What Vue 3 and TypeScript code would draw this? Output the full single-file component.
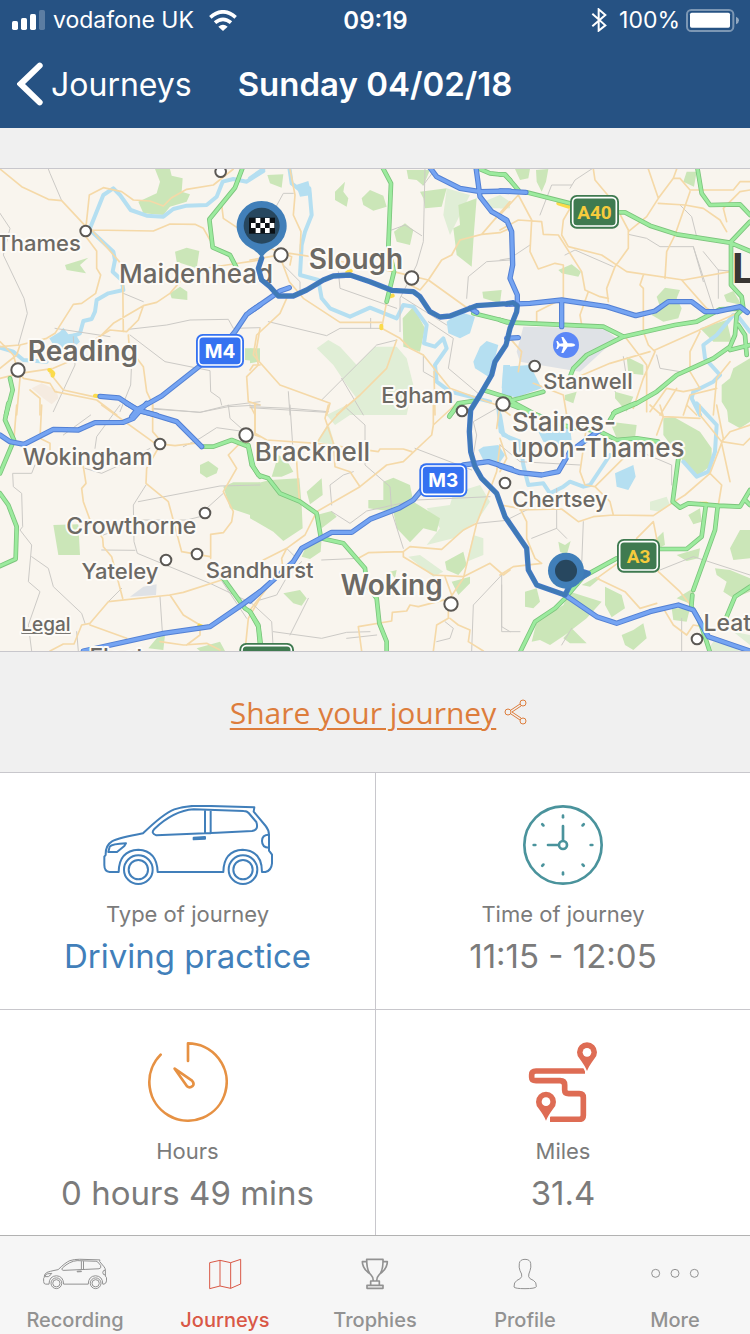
<script setup lang="ts">
interface Section {
  x: number
  y: number
  wood: string
  park: string
  lake: string
  river: string
  lane: string
  minor: string
  primary: string
  motorway: string
}

interface Label {
  text: string
  x: number
  y: number
  size: number
  kind: string
}

// The map is drawn in six sections, each with its own origin.
const sections: Section[] = [
  {
    x: 0,
    y: 0,
    wood: 'M415,110 470,85 480,50 465,12 510,12 515,32 548,40 545,80 570,88 560,110 510,125 490,150 430,145Z M525,260 560,248 598,258 590,310 530,290Z M195,300 265,278 240,300 258,325 200,315Z M510,385 540,365 562,380 562,405 515,400Z M735,550 780,550 780,590 735,585Z',
    park: '',
    lake: 'M148,520 180,500 190,488 205,508 225,505 240,530 205,562 165,548Z',
    river: 'M268,195 310,90 340,70 360,90 392,135 440,152 490,155 520,132 560,122 620,120 650,95 668,50 700,42 740,50 790,18 M270,195 340,260 345,285 338,320 365,345 370,375 325,385 290,405 285,440 275,462 250,468 240,505 200,520 M0,548 40,560 70,585 140,590',
    lane: 'M145,12 150,25 185,107 M0,145 30,190 10,270 72,400 82,445 55,540 M370,385 430,410 M385,493 500,480 570,465 685,463 700,490 780,488 M390,510 495,590 630,617 632,680 660,700 665,720 M395,590 392,660 360,740 M165,490 330,515 M220,515 225,600 160,740 M458,732 600,742 680,722 780,710',
    minor: 'M0,12 65,65 145,103 185,107 258,185 268,90 310,68 365,80 400,105 450,108 490,123 515,98 560,73 640,60 700,12 M275,195 460,198 510,177 585,178 610,190 630,225 M275,195 358,290 368,330 370,500 M258,215 290,258 290,310 302,330 287,385 245,415 220,418 165,505 140,520 60,540 0,545 M300,515 340,475 430,422 470,412 510,385 540,350 600,312 680,300 780,285 M430,422 415,465 380,500 330,495 290,520 230,580 160,610 60,625 0,640 M385,510 388,550 430,605 440,680 458,718 458,750 M60,625 70,640 150,655 165,680 290,705 350,750 M150,625 190,675 280,695 M60,640 50,750 M90,675 120,700 120,750 M0,530 40,570 60,640 M0,610 50,570 60,540 M780,490 768,560 775,600 740,635 745,710 780,720 M665,120 670,160 715,190 735,230',
    primary: 'M728,8 705,68 628,163 638,247 690,270 708,305 M30,640 38,675 18,750',
    motorway: 'M780,420 740,448 705,500 660,555 485,693 410,735 395,755 M300,694 357,699 415,737 470,750'
  },
  {
    x: 750,
    y: 0,
    wood: 'M52,30 100,28 95,68 60,55Z M255,80 285,50 280,80 295,100 290,125 255,105Z M335,100 360,75 400,92 410,125 370,137 340,120Z M470,15 540,15 520,62 500,45 475,42Z M510,80 590,70 575,125 525,130 520,100Z M625,120 680,100 672,200 665,305 620,270 610,190 630,180Z M432,200 465,175 490,195 480,240 440,230Z M697,380 755,375 750,415 700,400Z M458,460 490,425 525,490 510,560 460,545Z M0,550 18,555 25,590 0,595Z',
    park: 'M200,550 235,525 270,545 320,600 375,545 440,545 470,580 490,660 470,750 260,750 320,700 290,660 250,600Z M590,70 660,90 640,130 600,210 580,150Z M700,110 750,90 780,110 770,130 710,130Z',
    lake: 'M590,470 630,440 675,455 660,505 630,520 595,505Z M690,545 710,528 745,540 735,580 715,635 675,610 670,590Z M760,600 780,600 780,680 755,670Z M138,60 175,48 185,90 150,95Z',
    river: 'M0,40 40,12 M118,8 125,55 150,75 178,70 185,150 165,200 155,240 150,330 205,345 215,400 240,430 300,455 360,428 440,460 460,420 490,425 530,480 522,535 555,545 580,520 590,550 555,600 560,650 600,680 660,695 720,710',
    lane: 'M55,470 230,512 270,490 395,490 M265,320 270,370 440,430 M425,195 465,180 515,212 M525,12 520,230 500,300 450,400 450,500 M520,60 550,20 M780,285 710,290 655,335 650,400 M455,395 590,480 M535,470 610,520 595,610 690,690 M440,525 380,540 215,705 M0,725 120,730 235,740 M520,570 520,620 555,640 M70,140 100,85 130,85 M100,300 150,350 150,380 M115,680 120,750 M275,640 340,750 M362,460 362,490',
    minor: 'M120,12 135,90 130,150 153,200 150,260 M0,285 60,275 120,265 250,285 430,320 535,345 M90,275 118,350 160,400 270,472 395,472 M60,250 125,275 120,300 M410,410 395,490 450,520 480,550 520,570 600,670 740,720 780,750 M440,525 410,610 330,690 260,750 M660,435 535,345 510,375 480,360 M535,345 575,285 605,270 630,225 695,208 750,203 780,190 M695,208 780,110 M110,400 90,445 20,510 10,570 90,660 240,715 230,750 M0,615 10,600 30,600 M0,720 15,750 M552,620 555,750',
    primary: 'M398,8 423,55 415,245 432,320 410,410 M690,12 720,25 765,30 780,45 M670,445 780,472 M598,755 625,715 670,708 M700,675 780,700',
    motorway: 'M540,8 560,35 630,70 690,80 780,78 M678,8 690,95 725,140 770,165 M0,440 90,378 118,368 M660,430 680,442'
  },
  {
    x: 1500,
    y: 0,
    wood: 'M45,12 90,12 85,40 60,45Z M108,15 145,12 138,50 125,80 110,50Z M560,20 590,20 582,65 550,50Z M470,395 495,368 540,375 530,400 545,430 535,460 490,470 455,450 480,425Z M175,315 215,298 243,320 235,335 185,325Z M600,490 680,465 695,530 640,530Z M672,390 700,378 725,420 680,410Z M750,580 700,610 690,640 665,660 665,710 690,750 750,750Z M380,575 430,600 430,630 385,625Z M345,680 400,695 380,740 345,700Z M195,690 230,680 220,715 195,705Z',
    park: 'M0,110 30,110 30,130 0,130Z',
    lake: 'M10,605 90,600 125,670 50,697 5,690Z',
    river: 'M700,450 650,510 610,540 615,580 660,630 640,650 580,680 575,700 600,750 M715,455 750,500',
    lane: 'M215,60 155,60 120,150 M275,12 225,45 210,70 M385,208 440,220 480,245 580,245 610,350 M540,120 575,155 590,215 M580,245 640,430 M610,260 655,315 655,400 M195,270 225,255 340,305 M0,285 30,280 90,240 M470,570 480,610 540,620 M370,575 380,640 345,680 M655,315 690,318',
    minor: 'M280,12 285,45 340,110 385,195 385,250 345,305 320,370 325,410 M0,150 55,90 95,165 90,260 115,312 165,295 190,300 190,400 110,440 110,475 M0,195 55,165 125,170 130,208 175,210 245,320 255,375 300,395 325,400 M210,130 190,165 185,210 205,245 305,270 380,320 550,345 690,320 M445,12 475,100 440,155 385,200 M475,115 555,120 610,130 660,165 680,200 M530,12 520,40 475,100 M520,40 540,40 570,75 700,75 720,50 750,50 M680,170 670,130 720,80 750,75 M570,80 525,210 500,260 495,340 M545,345 620,430 640,440 M430,330 420,360 430,370 430,500 445,540 465,560 430,640 400,730 M265,380 240,450 245,480 M30,520 65,560 55,620 M465,555 720,440 M375,515 440,600 440,740 M200,650 330,595 450,560 M600,500 570,560 570,620 600,670 550,680 500,670 450,740 M690,590 650,640 640,750 M480,750 530,670 M100,655 190,690 200,750 M550,750 570,690 650,670',
    primary: 'M0,28 15,28 55,75 M80,82 210,115 M360,142 375,142 450,182 530,208 690,233 750,258 M592,8 605,85 630,120 720,118 750,150 M750,170 693,230 693,360 725,395 730,430 710,450 705,510 690,545 640,580 530,630 470,680 410,715 340,745 M0,465 20,472 310,485 370,515 525,480 590,470 660,433 730,430 M370,515 260,570 220,610 212,630 M715,480 735,510 740,570 M690,555 750,540 M10,712 60,700 130,680 M35,710 110,750',
    motorway: 'M0,78 78,82 M0,155 22,170 35,200 38,300 30,340 52,390 52,415 M20,418 90,415 185,405 320,425 407,452 465,438 505,410 575,410 615,440 650,440 720,425 742,442 M185,405 185,485 M20,520 55,518'
  },
  {
    x: 0,
    y: 720,
    wood: 'M600,180 625,168 655,190 650,205 620,218 600,205Z M160,360 235,358 240,450 175,450Z M670,245 700,232 780,232 780,340 690,310Z M445,730 470,700 495,690 490,735Z M590,730 660,710 675,738 600,738Z',
    park: '',
    lake: '',
    river: '',
    lane: 'M460,10 600,22 685,5 780,0 M685,0 690,40 735,80 M550,125 600,100 650,68 735,80 M105,180 95,205 38,205 40,245 65,265 68,365 60,375 95,420 85,530 120,560 85,660 95,738 M95,455 145,490 160,545 245,625 255,655 M415,290 660,243 780,240 M438,240 400,300 402,410 412,445 630,535 735,585 M415,345 560,345 600,335 M620,310 670,265 M305,435 405,436 M325,590 365,550 M480,575 487,680 M255,190 305,205 360,180 450,130 M285,130 290,95 360,0 M660,520 740,640 M230,680 235,738 M310,390 350,375 M190,90 272,30',
    minor: 'M305,0 465,115 525,122 600,113 M458,0 458,80 480,105 M480,120 440,190 438,235 505,290 545,440 630,455 M745,110 715,120 685,150 710,190 670,260 700,320 695,350 670,383 632,388 632,460 M200,170 250,185 258,235 245,250 250,290 270,345 308,400 310,425 335,455 368,580 M150,738 190,717 222,717 245,660 270,655 325,590 510,570 550,562 665,525 M510,570 550,630 600,660 600,690 560,720 M270,660 380,700 M480,710 550,720 620,715 660,735 M780,580 745,640 735,738 M50,0 42,100 M125,0 120,100 150,115 150,140 M765,0 765,90 780,95',
    primary: 'M25,-5 15,45 42,105 0,205 M0,265 25,300 50,365 47,462 0,483 M605,125 640,125 695,105 745,125 755,180 780,215 M670,520 735,610 750,620 775,665 780,720',
    motorway: 'M0,90 30,110 72,118 160,73 235,75 285,53 370,52 400,40 440,-5 M380,-5 415,15 530,50 605,125 M780,560 725,600 630,665 490,685 250,738'
  },
  {
    x: 750,
    y: 720,
    wood: 'M0,240 60,225 148,220 155,300 158,370 100,408 70,380 0,340Z M85,150 110,165 130,200 95,215 65,215Z M170,260 215,220 218,270 180,298Z M200,330 245,318 260,335 215,370Z M165,430 215,400 212,440 180,462 155,455Z M355,285 400,285 400,230 430,218 480,240 490,290 570,340 560,380 520,370 480,412 440,370 430,320 355,310Z M585,470 640,440 650,480 625,510 590,495Z M605,530 660,515 660,535 625,570Z M100,565 150,555 170,580 155,602 130,595Z M420,500 440,495 435,520Z',
    park: 'M230,30 290,0 330,0 330,10 255,60Z M200,110 235,55 255,120Z M530,310 600,300 610,265 690,240 720,290 680,350 610,400 530,420 570,370Z M475,455 510,450 580,500 550,515Z M670,390 700,400 700,450 650,470Z',
    lake: 'M685,135 700,125 745,120 765,150 750,172 700,165Z',
    river: 'M745,10 752,80 780,100',
    lane: 'M120,0 130,150 M0,8 230,22 M290,10 345,60 345,180 420,245 425,320 460,430 M245,300 240,240 280,210 310,200 M245,320 300,355 350,318 430,300 500,285 720,275 M110,430 140,460 M325,460 215,465 M175,580 120,690 M70,680 215,700 290,682 360,680 M0,590 65,650 70,738 M290,700 380,690 M495,130 665,195 M755,665 755,510 670,600 665,738 M755,665 780,680 M585,650 610,670 600,700 560,710 M680,355 780,345 M670,150 680,90 670,50 740,10 M30,585 80,570 120,500 155,470',
    minor: 'M15,-5 15,85 50,105 200,115 385,140 390,132 460,132 485,140 M615,0 550,60 545,90 460,170 410,180 330,245 200,320 165,390 110,430 40,465 M235,0 225,40 250,115 255,185 300,200 330,245 M290,0 235,60 200,115 M140,170 148,285 M325,460 355,443 460,440 480,425 575,433 640,375 680,355 725,240 740,200 750,120 M460,440 460,455 550,510 640,515 720,475 760,510 780,495 M680,355 640,520 600,580 505,605 480,600 470,618 427,622 425,648 325,665 335,738 M585,515 605,570 M595,600 595,640 560,660 550,738 M600,640 625,660 660,675 655,710 700,738 M110,430 95,460 100,500 M750,0 740,70 M90,500 0,615 M550,60 550,0',
    primary: 'M-5,120 10,185 25,210 55,220 90,265 150,290 200,325 213,400 280,415 345,490 350,540 380,580 388,655 410,710 410,742 M0,620 25,660 32,715 M600,30 622,5',
    motorway: 'M0,588 70,525 130,470 155,430 245,382 305,382 360,343 450,308 490,285 515,255 M640,180 715,170 785,192'
  },
  {
    x: 1500,
    y: 720,
    wood: 'M490,40 520,35 600,80 635,130 635,180 590,215 550,170 490,90Z M680,0 750,0 750,50 720,70 685,50Z M330,50 410,60 405,100 350,100Z M565,330 600,310 605,350 580,358Z M470,400 490,380 495,420 475,430Z M530,450 600,430 595,460 560,468Z M690,430 720,375 750,375 750,460 700,465Z M645,490 690,495 750,520 750,560 700,580 670,560 680,530 650,510Z M75,560 110,550 120,590 100,610 75,605Z M175,410 195,420 212,408 200,450 180,440Z M245,540 290,515 300,520 270,545Z M95,710 110,650 190,600 210,560 305,590 260,640 195,690 150,720 120,705Z M315,545 365,570 375,610 335,637 315,600Z M365,690 400,675 430,655 440,700 400,735 375,720Z M190,700 215,670 260,715 210,715Z M530,580 580,550 580,600Z M515,610 570,610 560,650 520,645Z',
    park: 'M450,290 500,275 510,300 480,320 450,315Z M640,710 690,720 720,738 620,738Z M700,680 750,690 750,720Z',
    lake: 'M345,205 400,180 407,215 385,255 350,245Z M115,80 210,70 215,105 170,120 130,110Z',
    river: 'M0,30 10,90 60,110 70,180 85,240 130,235 150,265 190,245 210,230 250,245 270,240 300,195 330,150 M590,-5 650,60 645,140 625,200 590,215 550,170',
    lane: 'M5,540 5,680 60,680 M170,250 170,370 200,400 M250,350 245,480 M95,400 170,370 M90,310 30,340 M420,140 515,180 515,240 M480,495 580,455 750,510 M545,640 545,738 M185,720 215,670 M0,120 60,170 240,180 M375,110 375,150',
    minor: 'M0,100 20,160 0,200 M260,60 240,200 255,240 285,245 330,290 340,330 460,332 515,295 555,270 630,205 665,240 655,300 M285,245 400,130 M0,300 60,310 80,350 80,400 105,460 125,475 40,485 0,510 M60,315 185,312 235,350 280,335 340,330 M410,400 460,350 470,400 475,500 540,560 580,610 M290,520 360,470 M290,520 375,560 420,610 470,595 M490,610 520,660 560,690 580,660 610,665 M450,0 490,35 600,40 M480,0 490,35 470,90 M560,0 590,30 M600,0 600,30 665,110 730,120 750,100 M665,110 690,80 750,60 M650,0 670,100 630,205 M665,115 690,230',
    primary: 'M35,0 150,45 M150,55 300,80 350,105 410,100 475,110 M330,45 345,20 405,-5 M535,160 518,290 540,308 565,295 655,302 720,305 750,255 M735,285 750,300 M617,305 605,395 560,432 475,432 M653,305 645,375 580,555 M577,570 574,605 595,640 610,680 630,742 M350,460 250,515 195,580 165,610 105,650 60,742 M680,635 705,575 750,545',
    motorway: 'M0,183 60,203 125,210 175,200 210,140 300,75 M195,570 290,635 350,655 450,620 535,600 580,615 625,695 750,738'
  }
]

const routeLine =
  'M785,280 775,310 785,345 810,365 835,393 880,393 920,375 970,345 1000,333 1050,330 1110,350 1175,376 1240,380 1260,395 1290,440 1320,456 1350,453 1430,422 1520,416 1540,413 1552,422 1550,440 1530,490 1518,540 1485,590 1475,630 1440,690 1412,735 1408,800 1412,860 1425,905 1445,940 1490,985 1515,1055 1580,1150 1585,1215 1610,1260 1695,1290 1710,1260 1765,1225 1750,1220'

const towns: number[][] = [
  [662, 20, 16], [257, 198, 16], [54, 615, 20], [843, 270, 20], [1235, 339, 20],
  [1604, 603, 16], [1509, 717, 20], [480, 837, 16], [738, 810, 20], [615, 1044, 16],
  [591, 1167, 16], [498, 1185, 16], [1386, 738, 16], [1515, 954, 16], [1353, 1317, 20],
  [2091, 1422, 16]
]

const labels: Label[] = [
  { text: 'Thames', x: 116, y: 257, size: 66, kind: 'town' },
  { text: 'Maidenhead', x: 588, y: 354, size: 78, kind: 'town' },
  { text: 'Reading', x: 249, y: 588, size: 84, kind: 'city' },
  { text: 'Slough', x: 1068, y: 312, size: 84, kind: 'city' },
  { text: 'Egham', x: 1252, y: 714, size: 66, kind: 'town' },
  { text: 'Stanwell', x: 1764, y: 672, size: 66, kind: 'town' },
  { text: 'Staines-', x: 1692, y: 798, size: 78, kind: 'town' },
  { text: 'upon-Thames', x: 1794, y: 876, size: 78, kind: 'town' },
  { text: 'Chertsey', x: 1680, y: 1026, size: 66, kind: 'town' },
  { text: 'Wokingham', x: 263, y: 900, size: 69, kind: 'town' },
  { text: 'Crowthorne', x: 394, y: 1106, size: 69, kind: 'town' },
  { text: 'Yateley', x: 360, y: 1242, size: 66, kind: 'town' },
  { text: 'Sandhurst', x: 779, y: 1238, size: 66, kind: 'town' },
  { text: 'Bracknell', x: 937, y: 889, size: 78, kind: 'town' },
  { text: 'Woking', x: 1175, y: 1290, size: 84, kind: 'city' },
  { text: 'Leat', x: 2182, y: 1398, size: 69, kind: 'town' },
  { text: 'Fleet', x: 350, y: 1500, size: 69, kind: 'town' }
]

const shields = [
  { text: 'M4', x: 588, y: 507, w: 144, kind: 'm' },
  { text: 'M3', x: 1258, y: 895, w: 144, kind: 'm' },
  { text: 'A40', x: 1710, y: 90, w: 147, kind: 'a' },
  { text: 'A3', x: 1851, y: 1122, w: 129, kind: 'a' },
  { text: '', x: 718, y: 1434, w: 164, kind: 'a' }
]

const flagCells: number[][] = [
  [1, 0], [3, 0], [0, 1], [2, 1], [4, 1], [1, 2], [3, 2]
]

const ticks: number[] = [0, 45, 90, 135, 180, 225, 270, 315]

const tabs = [
  { name: 'Recording', active: false },
  { name: 'Journeys', active: true },
  { name: 'Trophies', active: false },
  { name: 'Profile', active: false },
  { name: 'More', active: false }
]
</script>

<template>
  <div class="screen">
    <svg class="defs" aria-hidden="true">
      <symbol id="car" viewBox="157 75 512 240">
        <path d="M205,276 H178 Q162,275 162,255 V230 L166,225 Q165,196 185,184 Q205,174 278,160 Q340,100 372,88 Q405,77 450,77 L612,82 L610,95 L646,138 Q656,150 656,165 V212 L665,224 V250 Q663,272 645,276 H635 Q635,212 577,209 Q520,212 519,276 H322 Q320,212 264,209 Q206,212 205,276Z" />
        <circle cx="264" cy="269" r="43" /><circle cx="264" cy="269" r="29" />
        <circle cx="578" cy="269" r="43" /><circle cx="578" cy="269" r="29" />
        <path d="M318,166 Q300,160 312,147 Q370,92 430,88 L580,93 Q590,93 595,99 L618,126 Q626,150 605,153 L500,158Z M464,92V160 M481,92V160" />
        <path d="M430,173 464,171 464,176 430,178Z" />
        <path d="M174,216 178,200 Q185,192 227,190 L222,198 L200,216Z M656,164 Q635,164 635,183 Q635,203 656,203" />
      </symbol>
    </svg>

    <header class="top">
      <div class="status">
        <div class="carrier">
          <svg class="signal" viewBox="36 30 99 60" aria-hidden="true">
            <rect x="36" y="63" width="18" height="27" rx="5" />
            <rect x="63" y="54" width="18" height="36" rx="5" />
            <rect x="90" y="42" width="18" height="48" rx="5" />
            <rect class="dim" x="117" y="30" width="18" height="60" rx="5" />
          </svg>
          <span>vodafone UK</span>
          <svg class="wifi" viewBox="627 28 84 63" aria-hidden="true">
            <path class="arc" d="M631,50 Q669,17 707,50" />
            <path class="arc" d="M645,66 Q669,46 693,66" />
            <path d="M655,78 Q669,66 683,78 L669,91Z" />
          </svg>
        </div>
        <span class="clock">09:19</span>
        <div class="power">
          <svg class="bluetooth" viewBox="648 24 48 72" aria-hidden="true">
            <path d="M652,41 691,76 671,92 671,28 691,45 652,79" />
          </svg>
          <span>100%</span>
          <svg class="battery" viewBox="933 27 159 69" aria-hidden="true">
            <rect class="case" x="936" y="30" width="139" height="63" rx="13" />
            <rect x="945" y="38" width="120" height="45" rx="5" />
            <path class="nub" d="M1083,50 Q1092,54 1092,61 Q1092,69 1083,73Z" />
          </svg>
        </div>
      </div>
      <div class="bar">
        <button class="back" type="button">
          <svg viewBox="51 186 78 132" aria-hidden="true"><path d="M119,197 62,252 119,307" /></svg>
          <span>Journeys</span>
        </button>
        <h1>Sunday 04/02/18</h1>
      </div>
    </header>

    <main>
      <section class="map" aria-label="Map of the journey">
        <svg viewBox="0 12 2250 1446">
          <rect class="land" x="0" y="12" width="2250" height="1446" />
          <g v-for="s in sections" :key="`fill-${s.x}-${s.y}`" :transform="`translate(${s.x} ${s.y})`">
            <path class="park" :d="s.park" />
            <path class="wood" :d="s.wood" />
            <path class="river" :d="s.river" />
            <path class="lake" :d="s.lake" />
          </g>
          <path class="built" d="M1570,485 1810,490 1850,520 1740,620 1560,590 1550,560Z M390,1295 430,1265 470,1258 468,1290Z" />
          <path class="suburb" d="M95,670 125,655 170,675 175,700 155,718 130,700Z" />
          <g v-for="s in sections" :key="`road-${s.x}-${s.y}`" :transform="`translate(${s.x} ${s.y})`">
            <path class="lane" :d="s.lane" />
            <path class="minor" :d="s.minor" />
          </g>
          <path class="works" d="M148,615 158,622 M160,625 158,632 M285,692 296,694 M1042,322 1052,318 M1144,482 1144,490 M1168,395 1178,392 M1675,115 1705,125 M598,1382 606,1385 M2100,1016 2120,1016" />
          <g v-for="s in sections" :key="`pc-${s.x}-${s.y}`" :transform="`translate(${s.x} ${s.y})`">
            <path class="primary edge" :d="s.primary" />
          </g>
          <g v-for="s in sections" :key="`p-${s.x}-${s.y}`" :transform="`translate(${s.x} ${s.y})`">
            <path class="primary" :d="s.primary" />
          </g>
          <g v-for="s in sections" :key="`mc-${s.x}-${s.y}`" :transform="`translate(${s.x} ${s.y})`">
            <path class="motorway edge" :d="s.motorway" />
          </g>
          <g v-for="s in sections" :key="`m-${s.x}-${s.y}`" :transform="`translate(${s.x} ${s.y})`">
            <path class="motorway" :d="s.motorway" />
          </g>

          <text
            v-for="l in labels"
            :key="l.text"
            :class="l.kind"
            :x="l.x"
            :y="l.y"
            :font-size="l.size"
            text-anchor="middle"
          >{{ l.text }}</text>
          <text class="capital" x="2196" y="355" font-size="124">L</text>
          <a href="#legal"><text class="legal" x="138" y="1398" font-size="57" text-anchor="middle">Legal</text></a>

          <path class="route edge" :d="routeLine" />
          <path class="route" :d="routeLine" />

          <circle v-for="t in towns" :key="`${t[0]}-${t[1]}`" class="spot" :cx="t[0]" :cy="t[1]" :r="t[2]" />

          <g v-for="s in shields" :key="`${s.x}-${s.y}`" :class="['shield', s.kind]">
            <rect class="plate" :x="s.x" :y="s.y" :width="s.w" height="101" rx="20" />
            <rect class="rim" :x="s.x + 8" :y="s.y + 8" :width="s.w - 16" height="85" rx="13" />
            <text :x="s.x + s.w / 2" :y="s.y + 71" text-anchor="middle">{{ s.text }}</text>
          </g>

          <circle class="airport" cx="1698" cy="540" r="39" />
          <path class="plane" d="M1726,540 Q1724,535 1714,535 L1703,535 L1690,516 L1684,516 L1690,535 L1679,536 L1673,528 L1669,528 L1672,540 L1669,552 L1673,552 L1679,544 L1690,545 L1684,564 L1690,564 L1703,545 L1714,545 Q1724,545 1726,540Z" />

          <path class="pin" d="M785,280 Q776,262 752,250 A75,75 0 1 1 818,250 Q794,262 785,280Z" />
          <circle class="core" cx="785" cy="182" r="54" />
          <rect class="flag" x="747" y="158" width="78" height="48" />
          <rect v-for="c in flagCells" :key="`${c[0]}-${c[1]}`" class="cell" :x="753 + c[0] * 14" :y="159 + c[1] * 15" width="14" height="15" />
          <circle class="pin" cx="1698" cy="1217" r="54" />
          <circle class="core" cx="1698" cy="1217" r="33" />
        </svg>
      </section>

      <div class="share">
        <a href="#share">Share your journey</a>
        <svg viewBox="0 0 24 26" aria-hidden="true">
          <circle cx="4" cy="13" r="3" /><circle cx="19" cy="4" r="3" /><circle cx="19" cy="22" r="3" />
          <path d="M7,11 16,5 M8,13 17,7 M7,15 16,21 M8,13 17,19" />
        </svg>
      </div>

      <section class="facts">
        <article class="fact">
          <svg class="wide blue" aria-hidden="true"><use href="#car" /></svg>
          <p class="label">Type of journey</p>
          <p class="value accent">Driving practice</p>
        </article>
        <article class="fact">
          <svg class="teal" viewBox="219 75 240 240" aria-hidden="true">
            <circle cx="339" cy="195" r="116" />
            <circle cx="339" cy="195" r="12" />
            <path d="M339,180V138 M324,195H294" />
            <path v-for="t in ticks" :key="t" d="M339,107V112" :transform="`rotate(${t} 339 195)`" />
          </svg>
          <p class="label">Time of journey</p>
          <p class="value">11:15 - 12:05</p>
        </article>
        <article class="fact">
          <svg class="amber" viewBox="293 786 240 240" aria-hidden="true">
            <path d="M413,843V790 A116,116 0 1 1 331,824 M373,866 L425,902 Q433,911 427,918 Q418,926 410,919Z" />
          </svg>
          <p class="label">Hours</p>
          <p class="value">0 hours 49 mins</p>
        </article>
        <article class="fact">
          <svg class="red" viewBox="219 786 240 240" aria-hidden="true">
            <path class="trail" d="M405,873H258 Q245,873 245,884V892 Q245,902 258,902H330 Q344,902 344,915V930 Q344,941 356,941H388 Q400,941 400,953V1006 Q400,1018 388,1018H300" />
            <path class="drop" d="M411,873 Q405,858 390,838 A30,30 0 1 1 432,838 Q417,858 411,873Z" />
            <path class="drop" d="M288,1022 Q282,1007 267,987 A30,30 0 1 1 309,987 Q294,1007 288,1022Z" />
            <circle class="eye" cx="411" cy="817" r="13" />
            <circle class="eye" cx="288" cy="965" r="13" />
          </svg>
          <p class="label">Miles</p>
          <p class="value">31.4</p>
        </article>
      </section>
    </main>

    <nav class="tabs">
      <a v-for="t in tabs" :key="t.name" :href="`#${t.name.toLowerCase()}`" :class="{ active: t.active }">
        <svg v-if="t.name === 'Recording'" class="small-car" aria-hidden="true"><use href="#car" /></svg>
        <svg v-else-if="t.name === 'Journeys'" viewBox="576 84 192 96" aria-hidden="true">
          <path d="M626,98 657,91 689,98 719,88 719,162 689,175 657,168 626,176Z M657,91V168 M689,98V175" />
        </svg>
        <svg v-else-if="t.name === 'Trophies'" class="bold" viewBox="1029 84 192 96" aria-hidden="true">
          <path d="M1100,88H1149 Q1150,124 1136,136 Q1130,141 1130,153H1138V166H1149V175H1101V166H1112V153H1120 Q1120,141 1114,136 Q1100,124 1100,88Z M1112,153H1138 M1112,166H1138 M1100,95H1087 Q1087,116 1113,134 M1149,95H1162 Q1162,116 1137,134" />
        </svg>
        <svg v-else-if="t.name === 'Profile'" viewBox="349 84 192 96" aria-hidden="true">
          <path d="M445,88 Q430,88 428,100 Q426,112 430,122 Q437,133 435,140 Q431,148 421,151 Q411,157 412,171 Q415,176 445,176 Q476,176 479,170 Q480,156 470,151 Q458,147 456,140 Q455,133 460,122 Q464,112 462,100 Q460,88 445,88Z" />
        </svg>
        <svg v-else viewBox="803 84 192 96" aria-hidden="true">
          <circle cx="841" cy="130" r="12" /><circle cx="899" cy="130" r="12" /><circle cx="957" cy="130" r="12" />
        </svg>
        <span>{{ t.name }}</span>
      </a>
    </nav>
  </div>
</template>

<style>
body {
  margin: 0;
}
</style>

<style scoped>
.screen {
  display: flex;
  flex-direction: column;
  height: 100vh;
  background: #f0f0f0;
  color: #7b7b7b;
  font-family: Inter, "Liberation Sans", sans-serif;
}
.defs {
  position: absolute;
  width: 0;
  height: 0;
}
.top {
  background: #265283;
  color: #fff;
}
.status {
  display: grid;
  grid-template-columns: 1fr auto 1fr;
  align-items: center;
  height: 40px;
  padding: 0 11px 0 12px;
  font-size: 23px;
}
.status svg {
  fill: #fff;
}
.carrier,
.power {
  display: flex;
  align-items: center;
}
.carrier {
  gap: 8px;
}
.carrier .wifi {
  margin-left: 7px;
}
.power {
  justify-content: flex-end;
  gap: 6px;
}
.clock {
  font-size: 24px;
  font-weight: 600;
}
.signal {
  width: 33px;
  height: 20px;
}
.wifi {
  width: 28px;
  height: 21px;
}
.wifi .arc {
  fill: none;
  stroke: #fff;
  stroke-width: 11;
}
.bluetooth {
  width: 16px;
  height: 24px;
  margin-right: 6px;
}
.bluetooth path {
  fill: none;
  stroke: #fff;
  stroke-width: 6;
}
.battery {
  width: 53px;
  height: 23px;
}
.status .battery .case {
  fill: none;
  stroke: #fff;
  stroke-opacity: 0.4;
  stroke-width: 6;
}
.nub {
  opacity: 0.5;
}
.dim {
  opacity: 0.25;
}
.bar {
  display: grid;
  grid-template-columns: 1fr auto 1fr;
  align-items: center;
  height: 88px;
  padding: 0 17px;
}
.back {
  display: flex;
  align-items: center;
  justify-self: start;
  gap: 8px;
  padding: 0;
  border: 0;
  background: none;
  color: inherit;
  font: 400 32px Inter, "Liberation Sans", sans-serif;
}
.back svg {
  width: 26px;
  height: 44px;
  fill: none;
  stroke: #fff;
  stroke-width: 18;
  stroke-linecap: round;
}
h1 {
  margin: 0;
  font-size: 33px;
  font-weight: 600;
}
main {
  flex: 1;
  min-height: 0;
  overflow-y: auto;
  scrollbar-width: none;
  padding-top: 40px;
}
.map {
  border-top: 1px solid #c8c7cc;
  border-bottom: 1px solid #c8c7cc;
}
.map svg {
  display: block;
  width: 100%;
}
.land {
  fill: #f9f5ee;
}
.wood {
  fill: #cbe6b8;
}
.park {
  fill: #e0eed6;
}
.lake {
  fill: #b5dff1;
}
.built {
  fill: #dfe2e6;
}
.suburb {
  fill: #f5ebe0;
}
.river,
.lane,
.minor,
.works,
.primary,
.motorway,
.route {
  fill: none;
  stroke-linejoin: round;
  stroke-linecap: round;
}
.river {
  stroke: #b5dff1;
  stroke-width: 12;
}
.lane {
  stroke: #cccac6;
  stroke-width: 3;
}
.minor {
  stroke: #f5d9a8;
  stroke-width: 5;
}
.works {
  stroke: #fbdb4a;
  stroke-width: 12;
}
.primary {
  stroke: #9ceb9e;
  stroke-width: 9;
}
.primary.edge {
  stroke: #7cc47c;
  stroke-width: 14;
}
.motorway {
  stroke: #75a4f2;
  stroke-width: 10;
}
.motorway.edge {
  stroke: #5380d4;
  stroke-width: 16;
}
.route {
  stroke: #3f7ab6;
  stroke-width: 11;
}
.route.edge {
  stroke: #4679c9;
  stroke-width: 16;
}
.map text {
  font-family: Inter, "Liberation Sans", sans-serif;
}
.town,
.city,
.legal {
  fill: #6c6964;
  font-weight: 500;
  stroke: #fdfbf7;
  stroke-width: 12;
  stroke-linejoin: round;
  paint-order: stroke;
}
.city {
  font-weight: 600;
}
.legal {
  text-decoration: underline;
}
.capital {
  fill: #3a3733;
  font-weight: 700;
}
.spot {
  fill: #fff;
  stroke: #5b5854;
  stroke-width: 6;
}
.shield .rim {
  fill: none;
  stroke: #fff;
  stroke-width: 5;
}
.shield text {
  font-size: 57px;
  font-weight: 700;
}
.shield.m .plate {
  fill: #3572f1;
}
.shield.m text {
  fill: #fff;
}
.shield.a .plate {
  fill: #3f7a50;
}
.shield.a text {
  fill: #f6cb3c;
  font-family: Roboto, "Liberation Sans", sans-serif;
}
.airport {
  fill: #5b87f7;
}
.plane {
  fill: #fff;
}
.pin {
  fill: #417fb9;
}
.core {
  fill: #27475f;
}
.flag {
  fill: #0b1116;
}
.cell {
  fill: #fff;
}
.share {
  display: flex;
  align-items: center;
  justify-content: center;
  gap: 8px;
  height: 120px;
  padding-left: 8px;
  color: #dd7d3c;
}
.share a {
  color: inherit;
  font: 400 30px "Open Sans", "Noto Sans", sans-serif;
  text-decoration-thickness: 2px;
  text-underline-offset: 4px;
}
.share svg {
  width: 24px;
  height: 26px;
  fill: none;
  stroke: currentColor;
  stroke-width: 1;
}
.facts {
  display: grid;
  grid-template-columns: 1fr 1fr;
  border-top: 1px solid #c8c7cc;
}
.fact {
  display: flex;
  flex-direction: column;
  align-items: center;
  padding: 32px 0;
  background: #fff;
  border-bottom: 1px solid #c8c7cc;
}
.fact:nth-child(even) {
  border-left: 1px solid #c8c7cc;
}
.fact svg {
  width: 80px;
  height: 80px;
  fill: none;
  stroke: currentColor;
  stroke-width: 8;
  stroke-linecap: round;
  stroke-linejoin: round;
}
.fact .wide {
  width: 172px;
  stroke-width: 6;
}
.blue {
  color: #417fba;
}
.teal {
  color: #4a939c;
}
.amber {
  color: #e69143;
}
.red {
  color: #de6c54;
}
.fact .trail {
  stroke-width: 17;
  stroke-linecap: butt;
}
.fact .drop {
  fill: currentColor;
  stroke: #fff;
  stroke-width: 12;
  paint-order: stroke;
}
.fact .eye {
  fill: #fff;
  stroke: none;
}
.label,
.value {
  margin: 0;
}
.label {
  margin-top: 14px;
  font-size: 22px;
  line-height: 30px;
}
.value {
  margin-top: 6px;
  font-size: 33px;
  line-height: 42px;
}
.accent {
  color: #417fba;
}
.tabs {
  display: grid;
  grid-template-columns: repeat(5, 1fr);
  height: 98px;
  border-top: 1px solid #b2b2b2;
  background: #f6f6f6;
}
.tabs a {
  display: flex;
  flex-direction: column;
  align-items: center;
  justify-content: space-between;
  padding-top: 22px;
  color: #929292;
  font-size: 20px;
  font-weight: 500;
  line-height: 28px;
  text-decoration: none;
}
.tabs a.active {
  color: #d95846;
}
.tabs svg {
  width: 64px;
  height: 32px;
  fill: none;
  stroke: currentColor;
  stroke-width: 3;
  stroke-linejoin: round;
}
.tabs .small-car {
  stroke-width: 8;
}
.tabs .bold {
  stroke-width: 5;
}
</style>
